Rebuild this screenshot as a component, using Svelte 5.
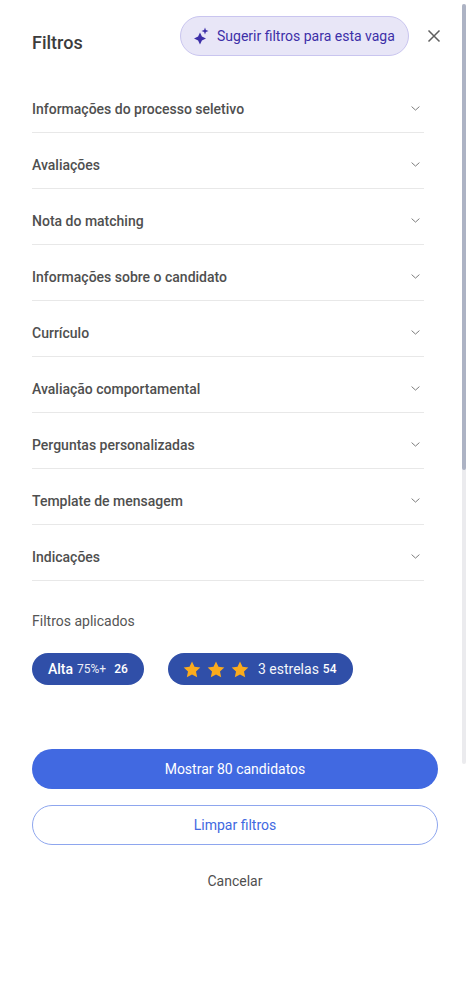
<script lang="ts">
  const sections = [
    'Informações do processo seletivo',
    'Avaliações',
    'Nota do matching',
    'Informações sobre o candidato',
    'Currículo',
    'Avaliação comportamental',
    'Perguntas personalizadas',
    'Template de mensagem',
    'Indicações'
  ];
  const stars = [1, 2, 3];
</script>

<div class="drawer">
  <header>
    <h1>Filtros</h1>
    <button type="button" class="suggest">
      <svg width="15" height="18" viewBox="0 0 15 18" fill="#3d2fa8" aria-hidden="true">
        <path d="M6 5.500 7.900 9.600 12 11.500 7.900 13.400 6 17.500 4.100 13.400 0 11.500 4.100 9.600z" />
        <path d="M11 .5l.9 2.600 2.600.9-2.600.9-.9 2.600-.9-2.600L7.500 4l2.600-.9z" />
      </svg>
      Sugerir filtros para esta vaga
    </button>
    <button type="button" class="close" aria-label="Fechar">
      <svg width="14" height="14" viewBox="0 0 14 14" fill="none" stroke="#5f5f5f" stroke-width="1.500" aria-hidden="true">
        <path d="M1.500 1.500l11 11M12.500 1.500l-11 11" />
      </svg>
    </button>
  </header>

  <div class="sections">
    {#each sections as section}
      <div class="row">
        <span>{section}</span>
        <svg width="9" height="5" viewBox="0 0 9 5" fill="none" stroke="#7d7d7d" stroke-width="1" aria-hidden="true">
          <path d="M.6.6l3.900 3.500L8.400.6" />
        </svg>
      </div>
    {/each}
  </div>

  <p class="applied">Filtros aplicados</p>
  <div class="chips">
    <div class="chip first">
      <b>Alta</b> <small>75%+</small> <em>26</em>
    </div>
    <div class="chip second">
      <span class="stars">
        {#each stars as star (star)}
          <svg width="18" height="17" viewBox="0 0 18 17" fill="#fbab1d" aria-hidden="true">
            <path d="M9 .5l2.500 5.300 5.800.7-4.300 4 1.200 5.800L9 13.400l-5.200 2.900L5 10.500l-4.300-4 5.800-.7z" />
          </svg>
        {/each}
      </span>
      <span class="label">3 estrelas</span>
      <em>54</em>
    </div>
  </div>

  <div class="actions">
    <button type="button" class="primary">Mostrar 80 candidatos</button>
    <button type="button" class="outline">Limpar filtros</button>
    <button type="button" class="cancel">Cancelar</button>
  </div>

  <div class="track"><div class="thumb"></div></div>
</div>

<style>
  :global(body) {
    background: #fff;
    font-family: Roboto, "Liberation Sans", sans-serif;
  }
  .drawer {
    position: relative;
    box-sizing: border-box;
    height: 989px;
    padding: 16px 32px 0;
    overflow: hidden;
  }
  header {
    display: flex;
    align-items: center;
    height: 40px;
  }
  h1 {
    margin: 12px 0 0;
    font-size: 18px;
    font-weight: 500;
    color: #3c3c3c;
  }
  button {
    font-family: inherit;
    cursor: pointer;
  }
  .suggest {
    display: flex;
    align-items: center;
    gap: 8px;
    box-sizing: border-box;
    width: 229px;
    height: 40px;
    margin-left: auto;
    padding: 0 0 0 13px;
    background: #e8e6f7;
    border: 1px solid #c9c5ef;
    border-radius: 20px;
    font-size: 14px;
    color: #3d2fa8;
    white-space: nowrap;
  }
  .close {
    display: flex;
    width: 14px;
    height: 14px;
    margin: 0 -3px 0 18px;
    padding: 0;
    background: none;
    border: 0;
  }
  .sections {
    width: 392px;
    margin-top: 21px;
  }
  .row {
    display: flex;
    align-items: center;
    justify-content: space-between;
    box-sizing: border-box;
    height: 56px;
    padding: 8px 4px 0 0;
    border-bottom: 1px solid #e8e8e8;
    font-size: 14px;
    font-weight: 500;
    color: #4f4f4f;
  }
  .applied {
    margin: 32px 0 0;
    font-size: 14px;
    line-height: 16px;
    color: #555;
  }
  .chips {
    display: flex;
    gap: 24px;
    margin-top: 24px;
  }
  .chip {
    display: flex;
    align-items: center;
    box-sizing: border-box;
    height: 32px;
    border-radius: 16px;
    background: #304fa8;
    color: #fff;
    font-size: 14px;
    white-space: nowrap;
  }
  .chip em {
    font-style: normal;
    font-weight: 500;
    font-size: 12px;
  }
  .first {
    width: 112px;
    padding-left: 16px;
    gap: 4px;
  }
  .first b {
    font-weight: 500;
  }
  .first small {
    font-size: 12px;
    opacity: 0.9;
  }
  .first em {
    margin-left: 4px;
  }
  .second {
    width: 185px;
    padding-left: 15px;
  }
  .stars {
    display: flex;
    gap: 6px;
    margin-right: 9px;
  }
  .label {
    margin-right: 4px;
    opacity: 0.95;
  }
  .actions {
    display: flex;
    flex-direction: column;
    width: 406px;
    margin-top: 64px;
  }
  .primary {
    height: 40px;
    background: #4169e1;
    border: 0;
    border-radius: 20px;
    color: #fff;
    font-size: 14px;
  }
  .outline {
    height: 40px;
    margin-top: 16px;
    background: #fff;
    border: 1px solid #8ea6ee;
    border-radius: 20px;
    color: #4169e1;
    font-size: 14px;
  }
  .cancel {
    height: 40px;
    margin-top: 16px;
    background: none;
    border: 0;
    color: #4f4f4f;
    font-size: 14px;
  }
  .track {
    position: absolute;
    top: 4px;
    left: 462px;
    width: 4px;
    height: 760px;
    border-radius: 2px;
    background: #ebebee;
  }
  .thumb {
    height: 466px;
    border-radius: 2px;
    background: #adb3c4;
  }
</style>
